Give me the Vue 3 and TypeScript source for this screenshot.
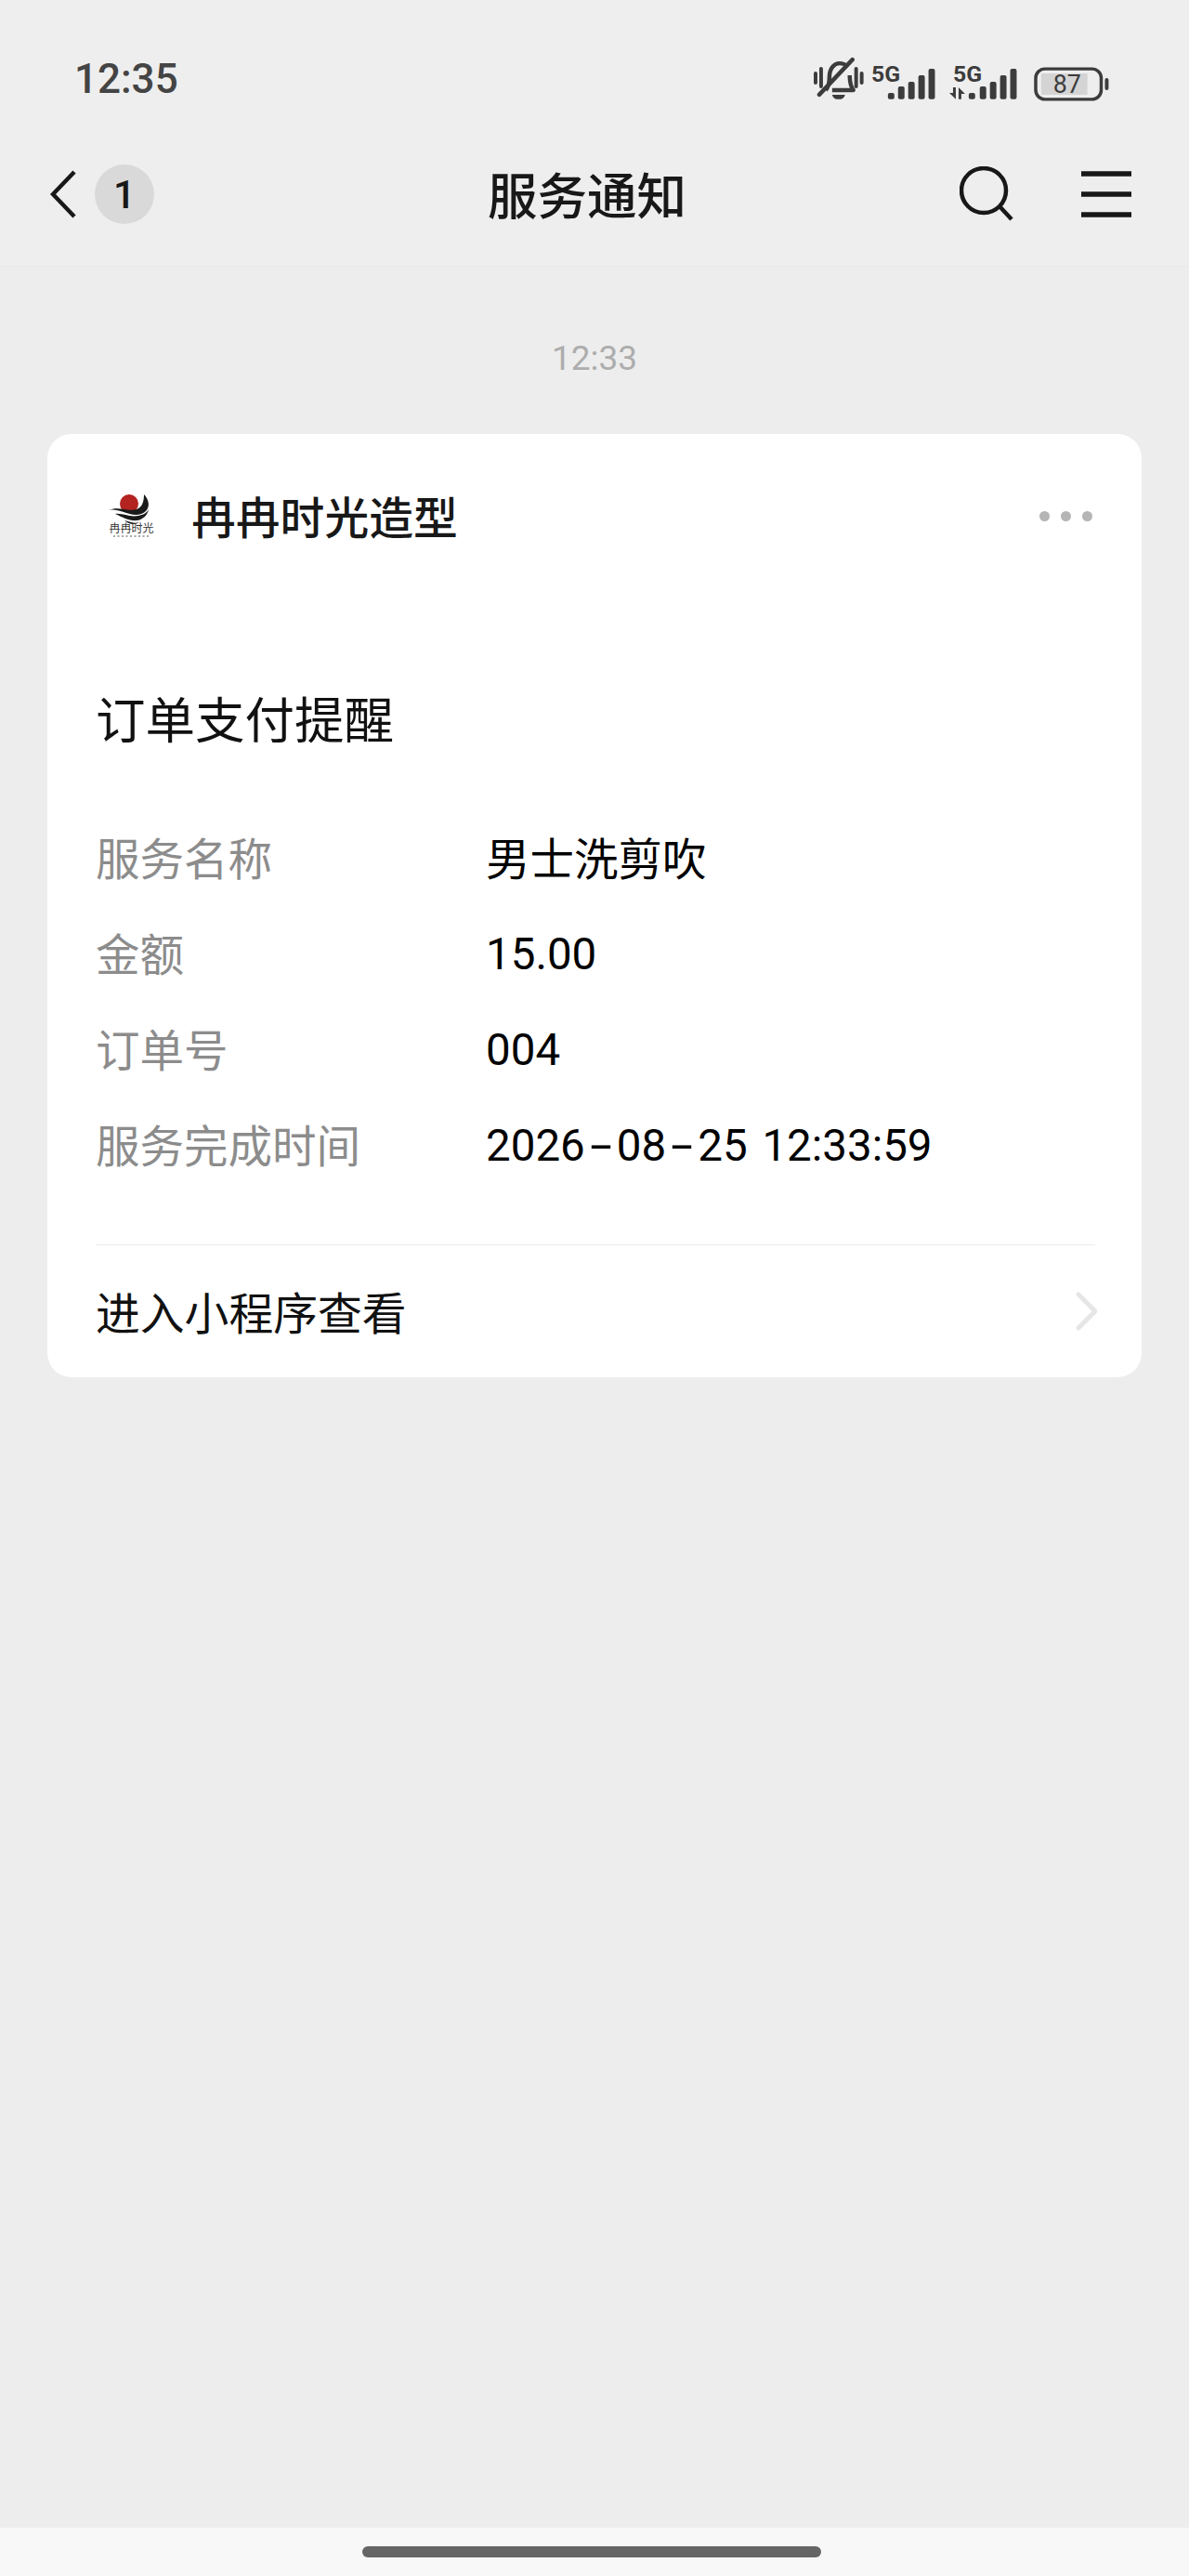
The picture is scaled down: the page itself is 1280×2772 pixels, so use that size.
<script setup lang="ts">
const rows = [
  { label: "服务名称", value: "男士洗剪吹", cjk: true },
  { label: "金额", value: "15.00" },
  { label: "订单号", value: "004" },
  { label: "服务完成时间", value: "2026-08-25 12:33:59" },
];

const firstBars = [
  { x: 18, h: 7 },
  { x: 29, h: 14 },
  { x: 40, h: 19 },
  { x: 51, h: 26 },
  { x: 62, h: 33 },
];
const secondBars = [
  { x: 21, h: 7 },
  { x: 33, h: 14 },
  { x: 44, h: 19 },
  { x: 55, h: 26 },
  { x: 66, h: 33 },
];
</script>

<template>
  <div class="page">
    <header class="top">
      <div class="status">
        <span class="clock">12:35</span>
        <div class="status-icons">
          <!-- 静音 -->
          <svg class="ic-bell" width="54" height="48" viewBox="0 0 54 48">
            <path d="M2 18v10M8 13v19M46 13v19M52 18v10" stroke="#3c3c3c" stroke-width="4" stroke-linecap="round" fill="none" />
            <path d="M13 36c3-3 4-6 4-14 0-9 5-15 11-15 3 0 6 1 8 3M39 20c0 8 1 12 4 16H20" stroke="#3c3c3c" stroke-width="4.5" stroke-linejoin="round" fill="none" />
            <path d="M20 41h14c-1 4-4 5-7 5s-6-1-7-5z" fill="#3c3c3c" />
            <path d="M6 41L42 3" stroke="#3c3c3c" stroke-width="4.5" stroke-linecap="round" />
          </svg>
          <svg class="ic-sig" width="70" height="46" viewBox="0 0 70 46">
            <text x="0" y="25" class="net">5G</text>
            <rect v-for="b in firstBars" :key="b.x" :x="b.x" :y="44 - b.h" width="7" :height="b.h" rx="2" fill="#3c3c3c" />
          </svg>
          <svg class="ic-sig2" width="74" height="46" viewBox="0 0 74 46">
            <text x="4" y="25" class="net">5G</text>
            <path d="M0 37h4v-6h3v13zM10 31l7 7h-4v6h-3z" fill="#3c3c3c" />
            <rect v-for="b in secondBars" :key="b.x" :x="b.x" :y="44 - b.h" width="7" :height="b.h" rx="2" fill="#3c3c3c" />
          </svg>
          <svg class="ic-bat" width="82" height="37" viewBox="0 0 82 37">
            <rect x="2" y="2" width="71" height="33" rx="10" fill="none" stroke="#3c3c3c" stroke-width="3.5" />
            <rect x="8" y="7" width="50" height="23" fill="#d4d4d4" />
            <rect x="77" y="12" width="4" height="13" rx="2" fill="#3c3c3c" />
            <text x="36" y="28" class="bat-num" text-anchor="middle">87</text>
          </svg>
        </div>
      </div>
      <nav class="nav">
        <div class="nav-left">
          <svg width="30" height="56" viewBox="0 0 30 56">
            <path d="M26 4L3 28l23 24" fill="none" stroke="#181818" stroke-width="4.5" />
          </svg>
          <span class="badge">1</span>
        </div>
        <h1 class="title">服务通知</h1>
        <div class="nav-right">
          <svg width="58" height="60" viewBox="0 0 58 60">
            <circle cx="26" cy="26" r="24" fill="none" stroke="#181818" stroke-width="4.5" />
            <path d="M43 43l13 14" stroke="#181818" stroke-width="4.5" />
          </svg>
          <svg width="54" height="50" viewBox="0 0 54 50">
            <path d="M0 3h54M0 25h54M0 47h54" stroke="#181818" stroke-width="5.5" />
          </svg>
        </div>
      </nav>
    </header>

    <main class="main">
      <div class="stamp">12:33</div>
      <section class="card">
        <div class="card-head">
          <svg class="logo" width="70" height="70" viewBox="0 0 70 70">
            <circle cx="36" cy="20" r="10" fill="#b3231f" />
            <path d="M14 27C24 22 36 29 44 26C50 24 52 18 52 10C57 15 59 23 54 28C48 34 38 32 30 29C24 27 19 26 14 27z" fill="#1a1a1a" />
            <path d="M21 31C30 30 36 35 46 33C51 32 55 30 57 26C56 32 51 37 45 38C36 39 30 35 21 31z" fill="#1a1a1a" />
            <path d="M31 38c5 1 9 4 16 2-4 3-11 3-16-2z" fill="#1a1a1a" />
            <text x="38.5" y="51" class="logo-name" text-anchor="middle">冉冉时光</text>
            <path d="M19 55h40" stroke="#8a8a8a" stroke-width="1.5" stroke-dasharray="2 2.5" />
          </svg>
          <span class="shop">冉冉时光造型</span>
          <div class="dots"><i></i><i></i><i></i></div>
        </div>
        <h2 class="card-title">订单支付提醒</h2>
        <div class="rows">
          <div v-for="row in rows" :key="row.label" class="row">
            <span class="label">{{ row.label }}</span>
            <span class="value" :class="{ cjk: row.cjk }">
              <template v-for="(part, i) in row.value.split('-')" :key="i">
                <span v-if="i > 0" class="dash">-</span>
                <span>{{ part }}</span>
              </template>
            </span>
          </div>
        </div>
        <div class="link">
          <span>进入小程序查看</span>
          <svg class="arrow" width="26" height="44" viewBox="0 0 26 44">
            <path d="M4 4l18 18L4 40" fill="none" stroke="#e6e6e6" stroke-width="5" stroke-linecap="round" stroke-linejoin="round" />
          </svg>
        </div>
      </section>
    </main>

    <footer class="home">
      <div class="pill"></div>
    </footer>
  </div>
</template>

<style scoped>
.page {
  width: 1280px;
  height: 2772px;
  display: flex;
  flex-direction: column;
  background: #ededed;
  font-family: "Noto Sans CJK SC", Roboto, sans-serif;
  color: #000;
}

.top {
  height: 287px;
  box-sizing: border-box;
  background: #eeeeee;
  border-bottom: 1px solid #e8e8e8;
}

.status {
  height: 150px;
  box-sizing: border-box;
  padding: 20px 0 0 80px;
  display: flex;
  align-items: center;
  justify-content: space-between;
}

.clock {
  font-family: Roboto, sans-serif;
  font-size: 44px;
  font-weight: 500;
  color: #444;
}

.status-icons {
  display: flex;
  align-items: flex-end;
  width: 318px;
  margin-right: 86px;
  height: 48px;
}

.ic-sig {
  margin-left: 8px;
}

.ic-sig2 {
  margin-left: 15px;
}

.ic-bat {
  margin-left: 17px;
}

.net {
  font-family: Roboto, sans-serif;
  font-size: 25px;
  font-weight: 700;
  fill: #3c3c3c;
}

.bat-num {
  font-family: Roboto, sans-serif;
  font-size: 27px;
  fill: #3c3c3c;
}

.nav {
  height: 118px;
  display: grid;
  grid-template-columns: 300px 679px 1fr;
  padding-left: 54px;
  align-items: center;
}

.nav-left {
  display: flex;
  align-items: center;
  gap: 18px;
}

.badge {
  width: 64px;
  height: 64px;
  border-radius: 50%;
  background: #d9d9d9;
  display: flex;
  align-items: center;
  justify-content: center;
  font-family: Roboto, sans-serif;
  font-size: 42px;
  font-weight: 500;
  color: #181818;
}

.title {
  margin: 0 0 3px;
  width: 556px;
  text-align: center;
  font-size: 53.5px;
  font-weight: 500;
  color: #181818;
}

.nav-right {
  display: flex;
  align-items: center;
  gap: 73px;
}

.main {
  flex: 1;
  padding: 75px 51px 0;
}

.stamp {
  height: 48px;
  line-height: 48px;
  text-align: center;
  font-family: Roboto, sans-serif;
  font-size: 37px;
  color: #adadad;
}

.card {
  margin-top: 57px;
  height: 1015px;
  box-sizing: border-box;
  padding: 0 50px 0 52px;
  background: #fff;
  border-radius: 26px;
}

.card-head {
  height: 180px;
  display: flex;
  align-items: center;
  gap: 33px;
}

.shop {
  flex: 1;
  padding-bottom: 6px;
  font-size: 47.8px;
  font-weight: 500;
  color: #181818;
}

.logo-name {
  font-size: 12px;
  fill: #333;
}

.dots {
  display: flex;
  gap: 12px;
  margin: 0 3px 3px 0;
}

.dots i {
  width: 11px;
  height: 11px;
  border-radius: 50%;
  background: #b5b5b5;
}

.card-title {
  margin: 95px 0 0;
  height: 60px;
  line-height: 60px;
  font-size: 53.5px;
  font-weight: 400;
  color: #111;
}

.rows {
  margin-top: 69px;
}

.row {
  height: 103px;
  display: flex;
  align-items: center;
  font-size: 47.5px;
}

.label {
  width: 420px;
  padding-bottom: 3px;
  color: #8c8c8c;
}

.value {
  padding-top: 2px;
  font-family: Roboto, "Noto Sans CJK SC", sans-serif;
  word-spacing: 4px;
  color: #000;
}

.value.cjk {
  padding: 0 0 3px;
}

.dash {
  display: inline-block;
  width: 34px;
  text-align: center;
  transform: scaleX(1.8);
}

.link {
  margin-top: 56px;
  height: 141px;
  border-top: 1px solid #ebebeb;
  display: flex;
  align-items: center;
  justify-content: space-between;
  font-size: 47.8px;
  color: #111;
}

.arrow {
  margin-right: -4px;
}

.home {
  height: 52px;
  background: #f8f8f8;
  display: flex;
  justify-content: center;
  padding-top: 20px;
  box-sizing: border-box;
}

.pill {
  width: 494px;
  height: 12px;
  margin-right: 6px;
  border-radius: 6px;
  background: #666;
}
</style>

<style>
body {
  margin: 0;
}
</style>
